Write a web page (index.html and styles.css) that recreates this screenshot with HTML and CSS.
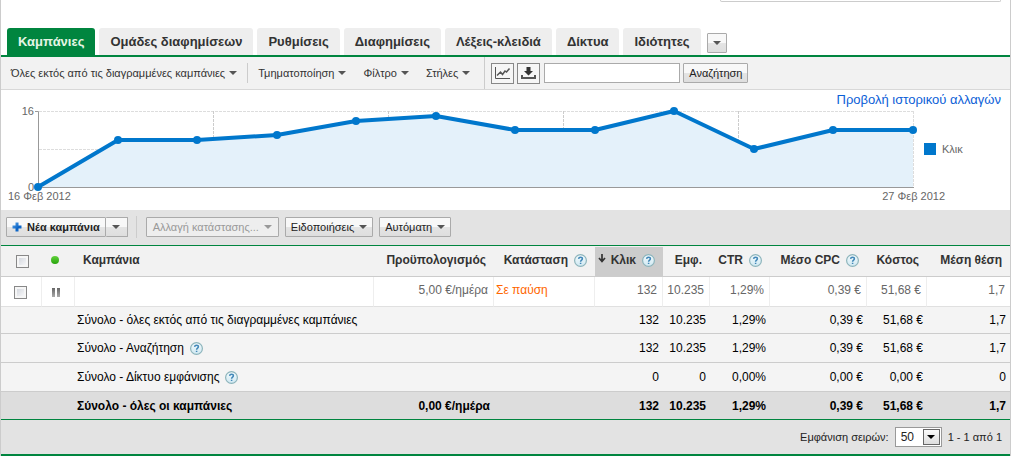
FILE: index.html
```html
<!DOCTYPE html>
<html lang="el">
<head>
<meta charset="utf-8">
<meta name="viewport" content="width=device-width, initial-scale=1">
<title>Καμπάνιες</title>
<link rel="stylesheet" href="styles.css">
</head>
<body>
<svg class="defs" aria-hidden="true">
  <defs>
    <linearGradient id="helpFill" x1="0" y1="0" x2="0" y2="1"><stop offset="0" stop-color="#f4fbfd"/><stop offset="1" stop-color="#cfe8f2"/></linearGradient>
    <linearGradient id="dotFill" x1="0" y1="0" x2="0" y2="1"><stop offset="0" stop-color="#62d23c"/><stop offset="1" stop-color="#27a30c"/></linearGradient>
    <linearGradient id="plusFill" x1="0" y1="0" x2="1" y2="1"><stop offset="0" stop-color="#5fa8ea"/><stop offset="0.6" stop-color="#0a62c4"/><stop offset="1" stop-color="#1570d0"/></linearGradient>
    <linearGradient id="pauseFill" x1="0" y1="0" x2="0" y2="1"><stop offset="0" stop-color="#666"/><stop offset="1" stop-color="#aaa"/></linearGradient>
    <symbol id="help" viewBox="0 0 13 13">
      <circle cx="6.5" cy="6.5" r="5.9" fill="url(#helpFill)" stroke="#8db4bb" stroke-width="1.2"/>
      <path d="M4.6 4.9C4.7 3.7 5.5 3.2 6.5 3.2C7.7 3.2 8.4 3.9 8.4 4.8C8.4 6.1 6.6 6.1 6.6 7.7M6.6 8.7V10.1" fill="none" stroke="#4287b8" stroke-width="1.5"/>
    </symbol>
  </defs>
</svg>
<div class="page">
  <div class="top"><div class="top-box"></div></div>

  <nav class="tabs">
    <a class="tab tab-active" href="#">Καμπάνιες</a>
    <a class="tab" href="#">Ομάδες διαφημίσεων</a>
    <a class="tab" href="#">Ρυθμίσεις</a>
    <a class="tab" href="#">Διαφημίσεις</a>
    <a class="tab" href="#">Λέξεις-κλειδιά</a>
    <a class="tab" href="#">Δίκτυα</a>
    <a class="tab" href="#">Ιδιότητες</a>
    <button class="btn tab-more" type="button" aria-label="Περισσότερες καρτέλες"><span class="caret"></span></button>
  </nav>

  <div class="toolbar">
    <button class="menu menu-view" type="button">Όλες εκτός από τις διαγραμμένες καμπάνιες<span class="caret"></span></button>
    <div class="menus">
      <button class="menu" type="button">Τμηματοποίηση<span class="caret"></span></button>
      <button class="menu" type="button">Φίλτρο<span class="caret"></span></button>
      <button class="menu" type="button">Στήλες<span class="caret"></span></button>
    </div>
    <form class="search">
      <button class="icon-btn" type="button" aria-label="Γράφημα">
        <svg width="17" height="14" viewBox="0 0 17 14" fill="none"><path d="M1.5 1V12.5H16" stroke="#555"/><path d="M3 9.5L6.5 6L8.5 8.5L11 5L12.5 6L15.5 2.5" stroke="#555" stroke-width="1.5"/></svg>
      </button>
      <button class="icon-btn" type="button" aria-label="Λήψη">
        <svg width="15" height="14" viewBox="0 0 15 14"><path d="M5.5 1H9.5V5H12L7.5 9.5L3 5H5.5Z" fill="#333"/><path d="M1 9V12H14V9" fill="none" stroke="#555" stroke-width="2"/></svg>
      </button>
      <input class="search-input" type="text" aria-label="Αναζήτηση">
      <button class="btn search-btn" type="button">Αναζήτηση</button>
    </form>
  </div>

  <section class="chart">
    <a class="history" href="#">Προβολή ιστορικού αλλαγών</a>
    <svg class="plot" viewBox="0 0 1009 120" role="img" aria-label="Κλικ">
      <g stroke="#ddd" stroke-dasharray="3 1" fill="none">
        <path d="M38 21.5H913M38 59.5H913M912.5 21V97"/>
        <path d="M212.5 21V97M387.5 21V97M562.5 21V97M737.5 21V97" stroke="#ccc"/>
      </g>
      <path d="M37 97L117 50L196 50L276 45L355 31L435 26L514 40L594 40L673 21L753 59L832 40L912 40V97Z" fill="#e4f1fa"/>
      <path d="M34 21.5H37.5V97.5H913" fill="none" stroke="#999"/>
      <path d="M37 97L117 50L196 50L276 45L355 31L435 26L514 40L594 40L673 21L753 59L832 40L912 40" fill="none" stroke="#0077cc" stroke-width="4" stroke-linejoin="round"/>
      <g fill="#0077cc">
        <circle cx="37" cy="97" r="4"/><circle cx="117" cy="50" r="4"/><circle cx="196" cy="50" r="4"/><circle cx="276" cy="45" r="4"/><circle cx="355" cy="31" r="4"/><circle cx="435" cy="26" r="4"/><circle cx="514" cy="40" r="4"/><circle cx="594" cy="40" r="4"/><circle cx="673" cy="21" r="4"/><circle cx="753" cy="59" r="4"/><circle cx="832" cy="40" r="4"/><circle cx="912" cy="40" r="4"/>
        <rect x="923" y="53" width="12" height="12"/>
      </g>
      <g class="plot-text">
        <text x="33" y="25" text-anchor="end">16</text>
        <text x="33" y="101" text-anchor="end">0</text>
        <text x="7" y="110">16 Φεβ 2012</text>
        <text x="944" y="110" text-anchor="end">27 Φεβ 2012</text>
        <text x="941" y="63">Κλικ</text>
      </g>
    </svg>
  </section>

  <div class="actions">
    <div class="split">
      <button class="btn new-btn" type="button"><svg width="10" height="10" viewBox="0 0 10 10"><path d="M3.5 0.5H6.5V3.5H9.5V6.5H6.5V9.5H3.5V6.5H0.5V3.5H3.5Z" fill="url(#plusFill)"/></svg>Νέα καμπάνια</button>
      <button class="btn split-more" type="button" aria-label="Περισσότερα"><span class="caret"></span></button>
    </div>
    <span class="divider"></span>
    <button class="btn wide-btn" type="button" disabled>Αλλαγή κατάστασης...<span class="caret"></span></button>
    <button class="btn" type="button">Ειδοποιήσεις<span class="caret"></span></button>
    <button class="btn" type="button">Αυτόματη<span class="caret"></span></button>
  </div>

  <table class="grid">
    <colgroup><col class="c-check"><col class="c-dot"><col><col class="c-budget"><col class="c-status"><col class="c-clicks"><col class="c-impr"><col class="c-ctr"><col class="c-cpc"><col class="c-cost"><col class="c-pos"></colgroup>
    <thead>
      <tr>
        <th class="pick"><input class="check" type="checkbox" aria-label="Επιλογή όλων"></th>
        <th class="mark"><svg width="8" height="8" viewBox="0 0 8 8"><circle cx="4" cy="4" r="4" fill="url(#dotFill)"/></svg></th>
        <th class="name">Καμπάνια</th>
        <th>Προϋπολογισμός</th>
        <th>Κατάσταση<svg class="help"><use href="#help"/></svg></th>
        <th class="sorted"><svg class="sort" width="8" height="9" viewBox="0 0 8 9"><path d="M4 0V7M1 4L4 7.5L7 4" fill="none" stroke="#333" stroke-width="1.7"/></svg>Κλικ<svg class="help"><use href="#help"/></svg></th>
        <th>Εμφ.</th>
        <th>CTR<svg class="help"><use href="#help"/></svg></th>
        <th>Μέσο CPC<svg class="help"><use href="#help"/></svg></th>
        <th>Κόστος</th>
        <th>Μέση θέση</th>
      </tr>
    </thead>
    <tbody>
      <tr class="item">
        <td class="pick"><input class="check" type="checkbox" aria-label="Επιλογή καμπάνιας"></td>
        <td class="mark"><svg width="8" height="9" viewBox="0 0 8 9"><path d="M0 0H3V9H0ZM5 0H8V9H5Z" fill="url(#pauseFill)"/></svg></td>
        <td></td><td>5,00 €/ημέρα</td><td class="status">Σε παύση</td><td>132</td><td>10.235</td><td>1,29%</td><td>0,39 €</td><td>51,68 €</td><td>1,7</td>
      </tr>
    </tbody>
    <tfoot>
      <tr class="first"><td></td><td></td><td class="name" colspan="3">Σύνολο - όλες εκτός από τις διαγραμμένες καμπάνιες</td><td>132</td><td>10.235</td><td>1,29%</td><td>0,39 €</td><td>51,68 €</td><td>1,7</td></tr>
      <tr><td></td><td></td><td class="name" colspan="3">Σύνολο - Αναζήτηση<svg class="help"><use href="#help"/></svg></td><td>132</td><td>10.235</td><td>1,29%</td><td>0,39 €</td><td>51,68 €</td><td>1,7</td></tr>
      <tr><td></td><td></td><td class="name" colspan="3">Σύνολο - Δίκτυο εμφάνισης<svg class="help"><use href="#help"/></svg></td><td>0</td><td>0</td><td>0,00%</td><td>0,00 €</td><td>0,00 €</td><td>0</td></tr>
      <tr class="all"><td></td><td></td><td class="name">Σύνολο - όλες οι καμπάνιες</td><td>0,00 €/ημέρα</td><td></td><td>132</td><td>10.235</td><td>1,29%</td><td>0,39 €</td><td>51,68 €</td><td>1,7</td></tr>
    </tfoot>
  </table>

  <div class="pager">
    <label for="rows">Εμφάνιση σειρών:</label>
    <span class="select-wrap"><select id="rows"><option>50</option></select><span class="select-arrow" aria-hidden="true"><span class="caret"></span></span></span>
    <span>1 - 1 από 1</span>
  </div>
</div>
</body>
</html>
```
FILE: styles.css
```css
* { box-sizing: border-box; }

body {
  margin: 0;
  background: #fff;
  color: #333;
  font: 12px/16px "Liberation Sans", Arial, sans-serif;
}

button, input, select { margin: 0; font: inherit; color: inherit; }
a { text-decoration: none; }
svg { flex: none; }

.defs { position: absolute; width: 0; height: 0; }

.page { border: solid #ccc; border-width: 0 1px; }

.top { display: flex; justify-content: flex-end; height: 28px; padding-right: 9px; }
.top-box {
  width: 281px;
  height: 2px;
  border: 1px solid #ccc;
  border-top: 0;
  border-radius: 0 0 2px 2px;
}

.tabs {
  display: flex;
  gap: 4px;
  padding-left: 6px;
  border-bottom: 2px solid #00853f;
}
.tab {
  height: 27px;
  padding: 0 11px;
  border-radius: 3px 3px 0 0;
  background: #eee;
  color: #333;
  font-size: 13px;
  font-weight: bold;
  line-height: 28px;
  white-space: nowrap;
}
.tab-active { background: #00853f; color: #e4f5e4; }

.caret {
  width: 0;
  height: 0;
  border: solid transparent;
  border-width: 4px 4px 0;
  border-top-color: #555;
}

.btn {
  display: flex;
  align-items: center;
  justify-content: center;
  gap: 5px;
  height: 20px;
  padding: 0 5px;
  border: 1px solid #aaa;
  border-radius: 1px;
  background: linear-gradient(#f8f8f8 50%, #e4e4e4 50%, #dedede);
  color: #222;
  font-size: 11px;
  white-space: nowrap;
}
.btn:disabled { color: #999; background: #eee; }
.btn:disabled .caret { border-top-color: #999; }
.tab-more { width: 20px; padding: 0; margin: 5px 0 0 2px; }

.toolbar {
  display: flex;
  align-items: center;
  height: 33px;
  border-bottom: 1px solid #d8d8d8;
  background: #f2f2f2;
}
.menu {
  display: flex;
  align-items: center;
  gap: 4px;
  height: 20px;
  padding: 0;
  border: 0;
  background: none;
  font-size: 11px;
  white-space: nowrap;
}
.menu-view { padding: 0 10px; border-right: 1px solid #ccc; }
.menus { display: flex; gap: 17px; padding: 0 14px 0 10px; }
.search {
  display: flex;
  align-items: center;
  gap: 3px;
  height: 100%;
  padding-left: 6px;
  border-left: 1px solid #ccc;
}
.icon-btn {
  display: flex;
  align-items: center;
  justify-content: center;
  width: 23px;
  height: 21px;
  padding: 0;
  border: 1px solid #888;
  background: #f6f6f6;
}
.search-input { width: 136px; height: 20px; margin-left: 1px; padding: 0 4px; border: 1px solid #aaa; background: #fff; }

.chart { position: relative; }
.history {
  position: absolute;
  top: 0;
  right: 9px;
  color: #0b5ed7;
  font-size: 13px;
  line-height: 20px;
}
.plot { display: block; width: 100%; height: auto; }
.plot-text { fill: #666; font-size: 11px; }

.actions {
  display: flex;
  align-items: center;
  gap: 6px;
  height: 36px;
  padding: 0 5px 2px;
  border-bottom: 1px solid #00853f;
  background: #e3e3e3;
}
.split { display: flex; }
.new-btn { font-weight: bold; }
.split-more { width: 22px; padding: 0; border-left: 0; }
.divider { width: 1px; height: 22px; margin: 0 3px 0 2px; background: #ccc; }
.wide-btn { width: 133px; }

.grid { width: 100%; border-collapse: separate; border-spacing: 0; table-layout: fixed; background: #f4f4f4; }
.grid th, .grid td { padding: 0 4px 0 0; text-align: right; white-space: nowrap; }
.c-check { width: 41px; }
.c-dot { width: 33px; }
.c-budget { width: 120px; }
.c-status { width: 101px; }
.c-clicks { width: 68px; }
.c-impr { width: 47px; }
.c-ctr { width: 60px; }
.c-cpc { width: 97px; }
.c-cost { width: 60px; }
.c-pos { width: 83px; }

.grid th { height: 31px; padding: 0 8px 2px 0; border-bottom: 1px solid #ccc; background: #f2f2f2; font-size: 12px; }
.grid .sorted { padding-bottom: 3px; background: #ccc; background-clip: padding-box; border-top: 1px solid #f2f2f2; }
.grid th.name { padding-left: 8px; text-align: left; }
.grid .pick, .grid .mark { padding: 0; text-align: center; }
.grid th.pick { padding-left: 2px; }
.grid th.mark { padding: 0 8px 4px 0; }
.grid .mark svg { vertical-align: middle; }
.help { width: 13px; height: 13px; margin-left: 6px; vertical-align: -3px; }
.sort { margin-right: 5px; vertical-align: 1px; }

.grid .item td { height: 30px; padding: 0 5px 3px 0; border: solid #eee; border-width: 0 1px 0 0; border-bottom: 1px solid #e0e0e0; background: #fff; color: #666; }
.grid .item td:last-child { border-right: 0; }
.grid .item .pick { padding: 0 2px 0 0; }
.grid .item .mark { padding: 0 4px 0 0; }
.grid .item .status { padding-left: 2px; color: #f60; text-align: left; }
.check {
  appearance: none;
  display: inline-block;
  width: 13px;
  height: 13px;
  border: 1px solid #888;
  background: linear-gradient(135deg, #ccd0d8, #fff) padding-box;
  box-shadow: inset 0 0 0 2px #f6f6f6;
  vertical-align: middle;
}

tfoot td { height: 29px; border-bottom: 1px solid #ccc; color: #000; }
tfoot .first td { height: 27px; }
.grid tfoot .name { padding-left: 2px; text-align: left; }
tfoot .all td { height: 28px; border-bottom-color: #00853f; background: #ddd; font-weight: bold; }

.pager {
  display: flex;
  align-items: center;
  justify-content: flex-end;
  gap: 6px;
  height: 36px;
  padding-right: 8px;
  border-bottom: 2px solid #00853f;
  background: #e3e3e3;
  color: #222;
  font-size: 11px;
}
.select-wrap { position: relative; display: flex; }
.select-wrap select {
  appearance: none;
  width: 47px;
  height: 20px;
  padding: 0 20px 0 5px;
  border: 1px solid #999;
  border-radius: 0;
  background: #fff;
  font-size: 12px;
}
.select-arrow {
  position: absolute;
  top: 2px;
  right: 2px;
  display: flex;
  align-items: center;
  justify-content: center;
  width: 17px;
  height: 16px;
  border: 1px solid #666;
  background: linear-gradient(#fafafa, #ddd);
  pointer-events: none;
}
.select-arrow .caret { border-top-color: #000; }
```
